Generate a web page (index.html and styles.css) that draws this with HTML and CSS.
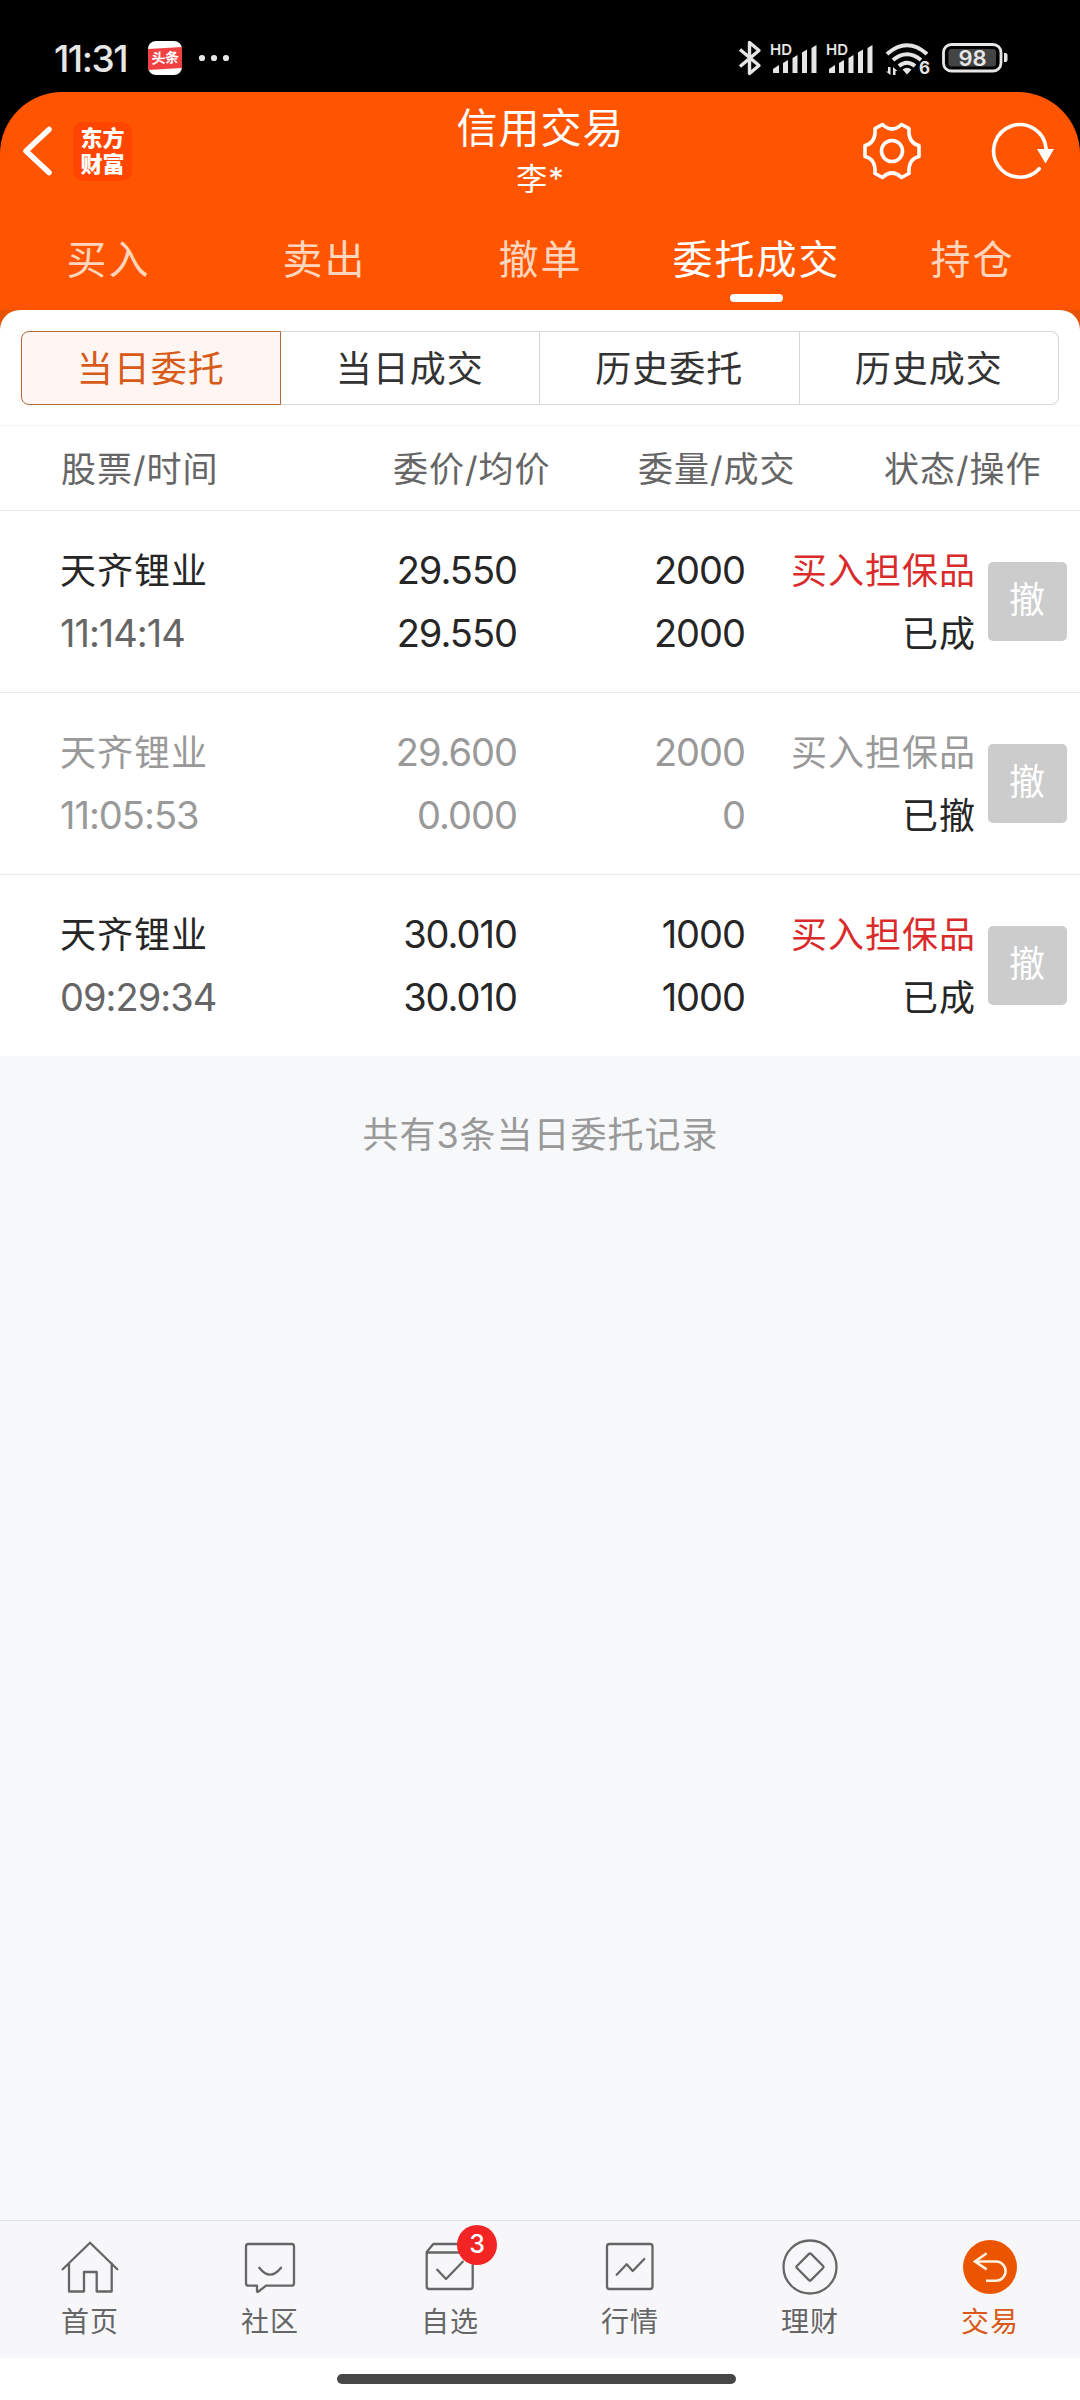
FILE: index.html
```html
<!DOCTYPE html>
<html lang="zh-CN">
<head>
  <meta charset="UTF-8" />
  <meta name="viewport" content="width=device-width, initial-scale=1.0"/>
  <title>信用交易</title>
  <link rel="stylesheet" href="styles.css">
</head>
<body>
  <!-- Status bar -->
  <div class="status-bar">
    <span class="clock">11:31</span>
    <span class="app-badge"><span>头条</span></span>
    <svg class="dots" width="32" height="8" viewBox="0 0 32 8"><circle cx="4" cy="4" r="3.1"/><circle cx="16" cy="4" r="3.1"/><circle cx="28" cy="4" r="3.1"/></svg>
    <div class="status-icons">
      <svg width="24" height="36" viewBox="0 0 24 36" fill="none" stroke="#e6e6e6" stroke-width="3.4" stroke-linejoin="round"><path d="M2 9.5 L21 25.5 L11.500 33.500 V2.500 L21 10.500 L2 26.500"/></svg>
      <svg class="signal" width="48" height="36" viewBox="0 0 48 36">
        <text x="0" y="15">HD</text>
        <path d="M3 33v-4l6-4v8zM13 33v-10l5-3v13zM22.500 33v-15l5-3v18zM32 33v-20.500l5-3v23.500zM41.500 33v-25l5-3v28z"/>
      </svg>
      <svg class="signal" width="48" height="36" viewBox="0 0 48 36">
        <text x="0" y="15">HD</text>
        <path d="M3 33v-4l6-4v8zM13 33v-10l5-3v13zM22.500 33v-15l5-3v18zM32 33v-20.500l5-3v23.500zM41.500 33v-25l5-3v28z"/>
      </svg>
      <svg class="wifi" width="46" height="36" viewBox="0 0 46 36">
        <g fill="none" stroke="#e6e6e6" stroke-width="4"><path d="M2 14 Q22 -3.500 42 14"/><path d="M8 20 Q22 8.500 36 20"/><path d="M14 26 Q22 19.500 30 26"/></g>
        <path d="M17.500 29.500 Q22 26 26.500 29.500 L22 34.500z"/>
        <path d="M3 27h2.500v8L1 31.500h2zM8 35v-8l4.500 4h-2v4z"/>
        <text x="34" y="34">6</text>
      </svg>
      <svg class="battery" width="68" height="30" viewBox="0 0 68 30">
        <rect x="1.500" y="1.500" width="57.500" height="26.500" rx="8" fill="none" stroke="#e6e6e6" stroke-width="2.800"/>
        <rect x="6.500" y="6" width="47.500" height="17.500" rx="3" fill="#444"/>
        <path d="M62 10h1.500a2 2 0 0 1 2 2v5a2 2 0 0 1-2 2h-1.500z"/>
        <text x="30.500" y="23" text-anchor="middle">98</text>
      </svg>
    </div>
  </div>

  <!-- Header -->
  <header class="header">
    <div class="title-bar">
      <div class="title-left">
        <svg width="30" height="50" viewBox="0 0 30 50" fill="none" stroke="#fff" stroke-width="5.500" stroke-linecap="round" stroke-linejoin="round"><path d="M27 3.500 L4 25 L27 46.500"/></svg>
        <div class="logo">东方<br>财富</div>
      </div>
      <div class="title-center">
        <h1>信用交易</h1>
        <p>李*</p>
      </div>
      <div class="title-right">
        <svg width="60" height="60" viewBox="-30 -30 60 60" fill="none" stroke="#fff" stroke-width="3.600" stroke-linejoin="round">
          <path d="M-9.500 -26.500 Q0 -17.500 9.500 -26.500 L17 -22.500 Q16 -8 27 -5.500 V5.500 Q16 8 17 22.500 L9.500 26.500 Q0 17.500 -9.500 26.500 L-17 22.500 Q-16 8 -27 5.500 V-5.500 Q-16 -8 -17 -22.500z"/>
          <circle r="10.500"/>
        </svg>
        <svg width="66" height="60" viewBox="-30 -30 66 60">
          <path d="M19.300 17.700 A26.300 26.300 0 1 1 26.200 -2" fill="none" stroke="#fff" stroke-width="3.600" stroke-linecap="round"/>
          <path d="M17 -2H34L25.500 12.500z" fill="#fff"/>
        </svg>
      </div>
    </div>
    <nav class="tabs">
      <a>买入</a>
      <a>卖出</a>
      <a>撤单</a>
      <a class="active">委托成交</a>
      <a>持仓</a>
    </nav>
  </header>

  <!-- Orders -->
  <main class="content">
    <div class="panel">
      <div class="segments">
        <div class="segment active">当日委托</div>
        <div class="segment">当日成交</div>
        <div class="segment">历史委托</div>
        <div class="segment">历史成交</div>
      </div>
      <div class="list-head">
        <span>股票/时间</span>
        <span>委价/均价</span>
        <span>委量/成交</span>
        <span>状态/操作</span>
      </div>

      <div class="order">
        <div class="cell name"><b>天齐锂业</b><i>11:14:14</i></div>
        <div class="cell num"><b>29.550</b><b>29.550</b></div>
        <div class="cell num"><b>2000</b><b>2000</b></div>
        <div class="cell state"><b class="buy">买入担保品</b><b>已成</b></div>
        <div class="cancel">撤</div>
      </div>

      <div class="order cancelled">
        <div class="cell name"><b>天齐锂业</b><i>11:05:53</i></div>
        <div class="cell num"><b>29.600</b><b>0.000</b></div>
        <div class="cell num"><b>2000</b><b>0</b></div>
        <div class="cell state"><b class="buy">买入担保品</b><b>已撤</b></div>
        <div class="cancel">撤</div>
      </div>

      <div class="order">
        <div class="cell name"><b>天齐锂业</b><i>09:29:34</i></div>
        <div class="cell num"><b>30.010</b><b>30.010</b></div>
        <div class="cell num"><b>1000</b><b>1000</b></div>
        <div class="cell state"><b class="buy">买入担保品</b><b>已成</b></div>
        <div class="cancel">撤</div>
      </div>
    </div>
    <p class="summary">共有3条当日委托记录</p>
  </main>

  <!-- Bottom navigation -->
  <nav class="bottom-nav">
    <a>
      <svg viewBox="0 0 60 56"><path d="M2.700 31.300 L30 4.700 L57.300 31.300M9 25.500V53.500H24V34H36.700V53.500H51.700V25.500"/></svg>
      首页
    </a>
    <a>
      <svg viewBox="0 0 60 56"><path d="M8.500 6H51.500a2.500 2.500 0 0 1 2.500 2.500V45.200a2.500 2.500 0 0 1-2.500 2.500H26L18.500 53.500Q17 54.500 17 53V47.700H8.500a2.500 2.500 0 0 1-2.500-2.500V8.500A2.500 2.500 0 0 1 8.500 6zM19.300 29.700Q30 43.500 41 29.700"/></svg>
      社区
    </a>
    <a>
      <svg viewBox="0 0 60 56"><path d="M6.700 14L13.300 6H46L52.700 14M6.700 14.500H52.700V48.500a2.500 2.500 0 0 1-2.500 2.500H9.200a2.500 2.500 0 0 1-2.500-2.500zM17.300 31.700L26 41L42.700 23.700"/></svg>
      自选
      <span class="badge">3</span>
    </a>
    <a>
      <svg viewBox="0 0 60 56"><rect x="7" y="6" width="45.500" height="45" rx="2.500"/><path d="M16.700 36.700L26.700 26.300L32.700 33L44.300 21"/></svg>
      行情
    </a>
    <a>
      <svg viewBox="0 0 60 56"><circle cx="30" cy="29" r="26.500"/><rect x="20" y="19" width="20" height="20" rx="1.500" transform="rotate(45 30 29)"/></svg>
      理财
    </a>
    <a class="active">
      <svg viewBox="0 0 60 56"><circle cx="30" cy="29" r="27"/><path d="M26.700 15.300L15 23.500L26.700 31.300M15 23.500H36a9.600 9.600 0 0 1 0 19.200H26"/></svg>
      交易
    </a>
  </nav>
  <div class="home-bar"><span></span></div>
</body>
</html>
```
FILE: styles.css
```css
* {
  margin: 0;
  padding: 0;
  box-sizing: border-box;
}

body {
  width: 1080px;
  height: 2400px;
  display: flex;
  flex-direction: column;
  background: #000;
  font-family: 'Inter', 'Noto Sans CJK SC', sans-serif;
  letter-spacing: 1px;
  overflow: hidden;
}

svg {
  display: block;
  flex: none;
  overflow: visible;
}

b, i {
  font-weight: normal;
  font-style: normal;
}

/* Status bar */
.status-bar {
  height: 92px;
  padding: 24px 70px 0 54px;
  display: flex;
  align-items: center;
  color: #e6e6e6;
  fill: #e6e6e6;
}

.clock {
  width: 94px;
  font-size: 37px;
  font-weight: 500;
  letter-spacing: -1.5px;
}

.app-badge {
  width: 34px;
  height: 34px;
  border-radius: 8px;
  background: #fff;
  display: flex;
  align-items: center;
}

.app-badge span {
  width: 34px;
  height: 21px;
  line-height: 20px;
  text-align: center;
  font-size: 14px;
  font-weight: bold;
  letter-spacing: -0.5px;
  color: #fff;
  background: #f04142;
  transform: skewY(-3deg);
}

.dots {
  margin-left: 16px;
}

.status-icons {
  margin-left: auto;
  display: flex;
  align-items: center;
}

.status-icons text {
  font-weight: 600;
  letter-spacing: 0;
}

.signal {
  margin-left: 8px;
}

.signal text {
  font-size: 15px;
}

.wifi {
  margin-left: 11px;
}

.wifi text {
  font-size: 17px;
  font-weight: bold;
}

.battery {
  margin-left: 11px;
}

.battery text {
  font-size: 22px;
}

/* Header */
.header {
  height: 218px;
  background: #ff5500;
  border-radius: 62px 62px 0 0;
  color: #fff;
}

.title-bar {
  height: 116px;
  display: grid;
  grid-template-columns: 1fr 300px 1fr;
}

.title-left {
  display: flex;
  align-items: center;
  gap: 21px;
  padding: 2px 0 0 22px;
}

.logo {
  width: 59px;
  height: 59px;
  padding-top: 3px;
  border-radius: 10px;
  background: #ff4500;
  text-align: center;
  font-size: 22px;
  line-height: 26px;
  font-weight: 900;
  letter-spacing: 0;
}

.title-center {
  padding-left: 1px;
  text-align: center;
}

.title-center h1 {
  margin-top: 7px;
  font-size: 41px;
  line-height: 58px;
  font-weight: 400;
}

.title-center p {
  font-size: 31px;
  line-height: 44px;
}

.title-right {
  display: flex;
  align-items: center;
  justify-content: flex-end;
  gap: 68px;
  padding: 1px 24px 0 0;
}

.tabs {
  height: 102px;
  display: grid;
  grid-template-columns: repeat(5, 1fr);
}

.tabs a {
  display: flex;
  flex-direction: column;
  align-items: center;
  padding: 22px 0 0 1px;
  font-size: 40px;
  line-height: 60px;
  letter-spacing: 2px;
  color: #ffd5bd;
}

.tabs .active {
  color: #fff;
}

.tabs .active::after {
  content: '';
  width: 53px;
  height: 8px;
  margin-top: 4px;
  border-radius: 4px;
  background: #fff;
}

/* Orders */
.content {
  flex: 1;
  background: linear-gradient(#e85206 40px, #f7f8fa 40px);
}

.panel {
  background: #fff;
  border-radius: 20px 20px 0 0;
}

.segments {
  height: 116px;
  padding: 21px 21px 20px;
  display: grid;
  grid-template-columns: repeat(4, 1fr);
  border-bottom: 1px solid #f5f5f5;
}

.segment {
  padding-bottom: 4px;
  border: 1px solid #d4d7d8;
  border-left-width: 0;
  display: flex;
  align-items: center;
  justify-content: center;
  font-size: 36px;
  color: #333;
}

.segment.active {
  border: 1px solid #b0683c;
  border-radius: 8px 0 0 8px;
  background: #fff5f2;
  color: #d85a18;
}

.segment:last-child {
  border-radius: 0 8px 8px 0;
}

.list-head {
  height: 85px;
  padding: 0 38px 4px 61px;
  display: flex;
  align-items: center;
  border-bottom: 1px solid #ebebeb;
  font-size: 35px;
  color: #666;
}

.list-head span {
  width: 158px;
}

.list-head span:nth-child(2) {
  margin-left: 174px;
}

.list-head span:nth-child(3) {
  margin-left: 87px;
}

.list-head span:nth-child(4) {
  margin-left: 88px;
}

.order {
  height: 182px;
  padding: 28px 13px 0 60px;
  display: grid;
  grid-template-columns: 239px 218px 228px 231px 91px;
  border-bottom: 1px solid #ebebeb;
  font-size: 36px;
  color: #262626;
}

.order:last-child {
  height: 181px;
  border-bottom: none;
}

.cell {
  display: flex;
  flex-direction: column;
  line-height: 63px;
  text-align: right;
  white-space: nowrap;
}

.name {
  text-align: left;
}

.name b, .state b {
  position: relative;
  top: 1px;
}

.name i {
  color: #666;
}

.name i, .num {
  font-size: 38px;
  letter-spacing: -1px;
}

.buy {
  color: #d92b2b;
}

.cancel {
  width: 79px;
  height: 79px;
  margin: 23px 0 0 12px;
  border-radius: 5px;
  background: #ccc;
  color: #fff;
  text-align: center;
  line-height: 77px;
}

.cancelled .name b, .cancelled .name i, .cancelled .num, .cancelled .buy {
  color: #999;
}

.summary {
  margin-top: 52px;
  padding-left: 1px;
  text-align: center;
  font-size: 36px;
  line-height: 54px;
  color: #999;
}

/* Bottom navigation */
.bottom-nav {
  height: 138px;
  display: grid;
  grid-template-columns: repeat(6, 1fr);
  background: #f7f7fa;
  border-top: 1px solid #e0e4e6;
}

.bottom-nav a {
  position: relative;
  display: flex;
  flex-direction: column;
  align-items: center;
  padding-top: 17px;
  font-size: 28px;
  line-height: 56px;
  color: #666;
}

.bottom-nav svg {
  width: 60px;
  height: 56px;
  fill: none;
  stroke: #666;
  stroke-width: 2.3;
  stroke-linejoin: round;
  stroke-linecap: round;
}

.bottom-nav .active {
  color: #d85a18;
}

.bottom-nav .active circle {
  fill: #eb5500;
  stroke: none;
}

.bottom-nav .active path {
  stroke: #fff0e0;
  stroke-width: 2.6;
  stroke-linejoin: miter;
  stroke-linecap: butt;
}

.badge {
  position: absolute;
  left: 97px;
  top: 4px;
  width: 40px;
  height: 40px;
  border-radius: 50%;
  background: #f22424;
  color: #fff;
  text-align: center;
  font-size: 25px;
  font-weight: 500;
  line-height: 39px;
  letter-spacing: 0;
}

.home-bar {
  height: 42px;
  padding: 16px 0 0 337px;
  background: #fff;
}

.home-bar span {
  display: block;
  width: 399px;
  height: 10px;
  border-radius: 5px;
  background: #474747;
}
```
